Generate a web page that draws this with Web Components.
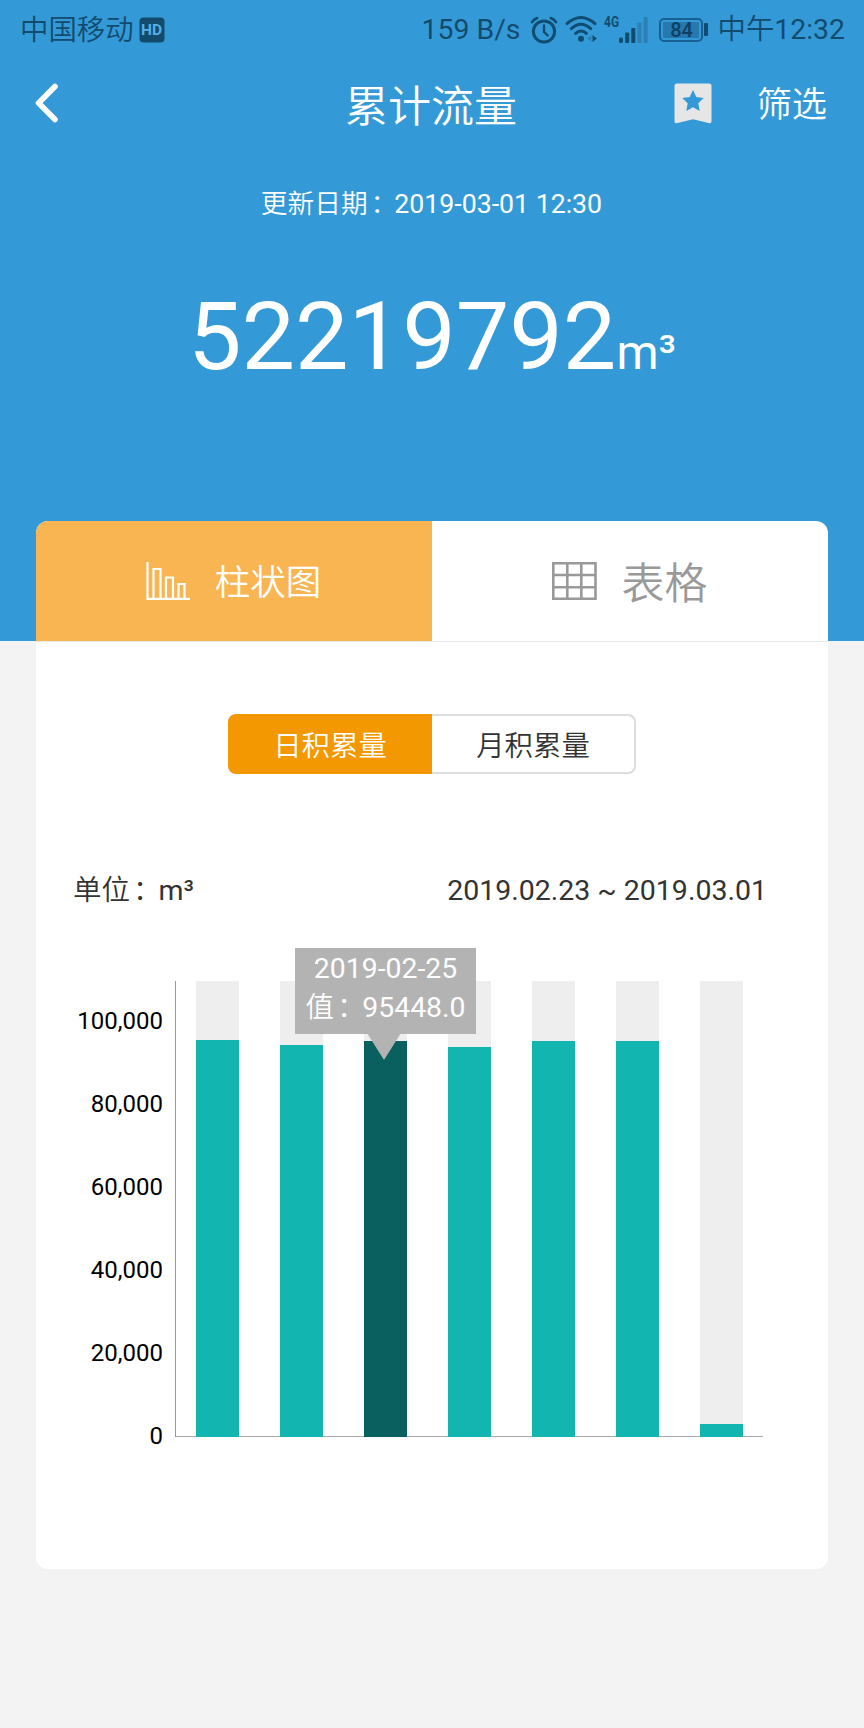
<!DOCTYPE html>
<html lang="zh-CN">
<head>
<meta charset="UTF-8">
<meta name="viewport" content="width=device-width, initial-scale=1.0">
<title>累计流量</title>
<style>
  body {
    margin: 0;
    background-color: #f3f3f3;
    font-family: Roboto, "Noto Sans CJK SC", sans-serif;
  }
</style>
</head>
<body>
<flow-page></flow-page>

<script>
const ICONS = {
  hd: `<svg width="26" height="26" viewBox="0 0 26 26"><rect x=".5" y=".5" width="25" height="25" rx="4" fill="#124b6e"/></svg>`,
  alarm: `<svg width="28" height="28" viewBox="0 0 28 28" fill="none" stroke="#0f4c70" stroke-linecap="round">
    <circle cx="14" cy="15.5" r="10.6" stroke-width="3"/>
    <path d="M14 9.5v6.5l3.6 3.4" stroke-width="2.4"/>
    <path d="M2 6.2Q3.8 3.2 7.2 2M26 6.2Q24.2 3.2 20.8 2" stroke-width="2.6"/></svg>`,
  wifi: `<svg width="32" height="28" viewBox="0 0 32 28" fill="none" stroke="#0f4c70" stroke-width="3" stroke-linecap="round">
    <path d="M2 8.6Q16-3.6 30 8.6M6.3 13.6Q16 5 25.7 13.6M10.6 18.3Q16 13.6 21.4 18.3"/>
    <circle cx="16" cy="23.8" r="3" fill="#0f4c70" stroke="none"/>
    <path d="M26.5 20v7l-4.5-3.5z" fill="#2f83b8" stroke="none"/>
    <path d="M27.5 20v7l4.5-3.5z" fill="#0f4c70" stroke="none"/></svg>`,
  signal: `<svg width="29" height="27" viewBox="0 0 29 27" fill="#0f4c70">
    <rect x="0" y="21.5" width="4" height="5.5" rx="1.5"/><rect x="6.2" y="16.5" width="4" height="10.5" rx="1"/>
    <rect x="12.3" y="12" width="4" height="15" rx="1"/>
    <g fill="#2c80b5"><rect x="18.4" y="6.5" width="4" height="20.5" rx="1"/><rect x="24.6" y="1" width="4" height="26" rx="1"/></g></svg>`,
  back: `<svg width="24" height="40" viewBox="0 0 24 40" fill="none" stroke="#fff" stroke-width="5.6" stroke-linecap="round" stroke-linejoin="round"><path d="M20 3.5L3.6 20 20 36.5"/></svg>`,
  bookmark: `<svg width="38" height="41" viewBox="0 0 38 41">
    <path d="M3 .5h32q2.5 0 2.5 2.5v35q0 3-3 1.9L19 36.200 3.500 39.900q-3 1.100-3-1.900V3Q.5.5 3 .5z" fill="#e6e6e6"/>
    <path d="M19 7l3.300 7 7.500 1-5.500 5.300 1.400 7.600L19 24.300l-6.700 3.600 1.400-7.600L8.200 15l7.500-1z" fill="#349ad7"/></svg>`,
  bars: `<svg width="44" height="38" viewBox="0 0 44 38" fill="none" stroke="#fff" stroke-width="2.2"><path d="M1.500 0v36.800H44M7.500 36.500V7h7v29.500M20 36.500V15.500h7v21M32.500 36.500V22h6v14.500"/></svg>`,
  table: `<svg width="45" height="38" viewBox="0 0 45 38" fill="none" stroke="#999" stroke-width="2.6"><path d="M1.300 1.300h42.200v35.400H1.300zM15.300 1v36M29.300 1v36M1 13h43M1 25.200h43"/></svg>`
};

class AppIcon extends HTMLElement {
  connectedCallback() {
    this.attachShadow({ mode: 'open' }).innerHTML = `
      <style>
        :host { display: block; flex: none; line-height: 0; }
        svg { display: block; overflow: visible; }
      </style>
      ${ICONS[this.getAttribute('name')] || ''}
    `;
  }
}

class StatusBar extends HTMLElement {
  connectedCallback() {
    this.attachShadow({ mode: 'open' }).innerHTML = `
      <style>
        :host {
          display: flex;
          justify-content: space-between;
          box-sizing: border-box;
          height: 60px;
          padding: 0 19px 0 20px;
          color: #124b6e;
          font-size: 28.4px;
          line-height: 60px;
          white-space: nowrap;
        }
        .group { display: flex; align-items: center; }
        .carrier { padding-top: 2px; font-weight: 350; line-height: 58px; }
        .cjk { font-weight: 350; }
        .badge {
          display: grid;
          width: 26px;
          height: 26px;
          margin: -1px 0 0 5px;
        }
        .badge > * { grid-area: 1 / 1; }
        .badge span {
          z-index: 1;
          color: #55b0e4;
          font: 700 15.5px/26px Roboto, sans-serif;
          text-align: center;
        }
        .net { align-self: flex-start; margin: 12px 0 0 7px; width: 15px; font: 700 15px/20px Roboto, sans-serif; }
        .net span { display: inline-block; transform: scaleX(.8); transform-origin: left; }
        .battery {
          box-sizing: border-box;
          width: 44px;
          height: 24px;
          margin: -1px 0 0 11px;
          padding: 2px;
          border: 2px solid #176093;
          border-radius: 5px;
        }
        .battery div {
          width: 34px;
          height: 16px;
          padding-left: 2px;
          background: #2679ae;
          color: #0d4162;
          font-size: 20px;
          font-weight: 500;
          line-height: 17px;
          text-align: center;
        }
        .tip { width: 4px; height: 13px; margin: -1px 10px 0 1px; border-radius: 1px; background: #0f4c70; }
      </style>
      <div class="group">
        <span class="carrier">中国移动</span>
        <div class="badge"><app-icon name="hd"></app-icon><span>HD</span></div>
      </div>
      <div class="group">
        <span>159 B/s</span>
        <app-icon name="alarm" style="margin-left: 9px"></app-icon>
        <app-icon name="wifi" style="margin: -2px 0 0 7px"></app-icon>
        <div class="net"><span>4G</span></div>
        <app-icon name="signal" style="margin-top: -2px"></app-icon>
        <div class="battery"><div>84</div></div>
        <div class="tip"></div>
        <span><span class="cjk">中午</span>12:32</span>
      </div>
    `;
  }
}

class NavBar extends HTMLElement {
  connectedCallback() {
    this.attachShadow({ mode: 'open' }).innerHTML = `
      <style>
        :host {
          display: grid;
          grid-template-columns: 1fr auto 1fr;
          align-items: center;
          height: 86px;
          padding: 0 37px 2px 35px;
          font-weight: 350;
        }
        h1 { margin: 0; padding-top: 8px; font-size: 43px; font-weight: 350; line-height: 78px; }
        .actions { display: flex; justify-content: flex-end; align-items: center; gap: 45px; font-size: 35.2px; line-height: 52px; }
        .actions span { margin-top: 4px; }
      </style>
      <app-icon name="back"></app-icon>
      <h1><slot></slot></h1>
      <div class="actions"><app-icon name="bookmark"></app-icon><span>筛选</span></div>
    `;
  }
}

class FlowTotal extends HTMLElement {
  connectedCallback() {
    this.attachShadow({ mode: 'open' }).innerHTML = `
      <style>
        :host { display: block; text-align: center; }
        .date { padding: 36px 1px 0 0; font-size: 26.7px; line-height: 40px; }
        .cjk { font-weight: 350; }
        .colon { display: inline-block; transform: translateX(3px); }
        .value { margin-top: 57px; font-size: 95.3px; line-height: 112px; }
        small { font-size: 48px; }
      </style>
      <div class="date"><span class="cjk">更新日期<span class="colon">：</span></span>${this.getAttribute('updated')}</div>
      <div class="value">${this.getAttribute('value')}<small>m³</small></div>
    `;
  }
}

class ViewTab extends HTMLElement {
  connectedCallback() {
    this.attachShadow({ mode: 'open' }).innerHTML = `
      <style>
        :host {
          display: flex;
          flex: 1;
          box-sizing: border-box;
          justify-content: center;
          align-items: center;
          gap: 25px;
          height: 120px;
          padding-right: 1px;
          color: #999;
          font-size: 43px;
          font-weight: 350;
        }
        :host([active]) { background: #f9b552; color: #fff; font-size: 35.5px; }
        span { margin-top: -3px; }
      </style>
      <app-icon name="${this.getAttribute('icon')}"></app-icon>
      <span><slot></slot></span>
    `;
  }
}

class SegmentSwitch extends HTMLElement {
  connectedCallback() {
    const items = this.getAttribute('items').split(',');
    this.attachShadow({ mode: 'open' }).innerHTML = `
      <style>
        :host { display: flex; width: 408px; height: 60px; margin: 0 auto; font-size: 28.4px; font-weight: 350; line-height: 66px; text-align: center; }
        div { flex: none; width: 204px; box-sizing: border-box; color: #333; }
        .on { background: #f39800; color: #fff; border-radius: 8px 0 0 8px; }
        .off { border: 2px solid #ddd; border-left: 0; border-radius: 0 8px 8px 0; line-height: 62px; }
      </style>
      ${items.map((item, i) => `<div class="${i === 0 ? 'on' : 'off'}">${item}</div>`).join('')}
    `;
  }
}

class BarChart extends HTMLElement {
  connectedCallback() {
    const values = this.getAttribute('values').split(',').map(Number);
    const selected = Number(this.getAttribute('selected'));
    const max = 110000;
    const ticks = ['100,000', '80,000', '60,000', '40,000', '20,000', '0'];

    this.attachShadow({ mode: 'open' }).innerHTML = `
      <style>
        :host { display: flex; position: relative; align-items: flex-start; height: 500px; }
        .ticks { width: 127px; margin-right: 12px; color: #000; font-size: 24px; text-align: right; }
        .ticks div { height: 83px; line-height: 83px; }
        .plot {
          display: flex;
          box-sizing: border-box;
          width: 588px;
          height: 456px;
          margin-top: 1px;
          padding-left: 20px;
          gap: 41.5px;
          background: linear-gradient(#aaa, #aaa) bottom / 100% 1px no-repeat;
          border-left: 1px solid #999;
        }
        .track { display: flex; flex: none; align-items: flex-end; width: 42.5px; background: #eee; }
        .bar { width: 100%; background: #13b5b1; }
        .bar.selected { background: #0a605f; }
        /* floats over the selected bar */
        .tooltip {
          position: absolute;
          left: 259px;
          top: -32px;
          width: 181px;
          height: 86px;
          background: #b3b3b3;
          color: #fff;
          font-size: 28.4px;
          text-align: center;
          white-space: nowrap;
        }
        .tooltip div { padding-top: 2px; line-height: 37px; }
        .cjk { font-weight: 350; }
        .colon { display: inline-block; transform: translateX(3px); }
        .tooltip::after {
          content: "";
          position: absolute;
          left: 72px;
          top: 85px;
          border: solid transparent;
          border-width: 27px 17px 0;
          border-top-color: #b3b3b3;
        }
      </style>
      <div class="ticks">${ticks.map(t => `<div>${t}</div>`).join('')}</div>
      <div class="plot">
        ${values.map((v, i) => `<div class="track"><div class="bar ${i === selected ? 'selected' : ''}" style="height: ${v / max * 100}%"></div></div>`).join('')}
      </div>
      <div class="tooltip">
        <div>${this.getAttribute('tip-date')}</div>
        <div><span class="cjk">值<span class="colon">：</span></span>${values[selected].toFixed(1)}</div>
      </div>
    `;
  }
}

class FlowPage extends HTMLElement {
  connectedCallback() {
    this.attachShadow({ mode: 'open' }).innerHTML = `
      <style>
        :host { display: block; height: 1728px; overflow: hidden; background: #f3f3f3; }
        header { height: 641px; background: #349ad7; color: #fff; }
        main {
          box-sizing: border-box;
          height: 1048px;
          margin: -120px 36px 0;
          overflow: hidden;
          border-radius: 12px;
          background: #fff;
        }
        nav { display: flex; border-bottom: 1px solid #e8e8e8; }
        segment-switch { margin-top: 71.5px; }
        .legend {
          display: flex;
          justify-content: space-between;
          padding: 0 61px 0 37px;
          margin: 96.5px 0 68px;
          color: #333;
          font-size: 28.5px;
          line-height: 42px;
        }
        .cjk { font-weight: 350; }
        .colon { display: inline-block; transform: translateX(3px); }
      </style>
      <header>
        <status-bar></status-bar>
        <nav-bar>累计流量</nav-bar>
        <flow-total updated="2019-03-01 12:30" value="52219792"></flow-total>
      </header>
      <main>
        <nav>
          <view-tab icon="bars" active>柱状图</view-tab>
          <view-tab icon="table">表格</view-tab>
        </nav>
        <segment-switch items="日积累量,月积累量"></segment-switch>
        <div class="legend"><span><span class="cjk">单位<span class="colon">：</span></span>m³</span><span>2019.02.23 ~ 2019.03.01</span></div>
        <bar-chart values="95800,94600,95448,94100,95600,95600,3100" selected="2" tip-date="2019-02-25"></bar-chart>
      </main>
    `;
  }
}

customElements.define('app-icon', AppIcon);
customElements.define('status-bar', StatusBar);
customElements.define('nav-bar', NavBar);
customElements.define('flow-total', FlowTotal);
customElements.define('view-tab', ViewTab);
customElements.define('segment-switch', SegmentSwitch);
customElements.define('bar-chart', BarChart);
customElements.define('flow-page', FlowPage);
</script>
</body>
</html>
